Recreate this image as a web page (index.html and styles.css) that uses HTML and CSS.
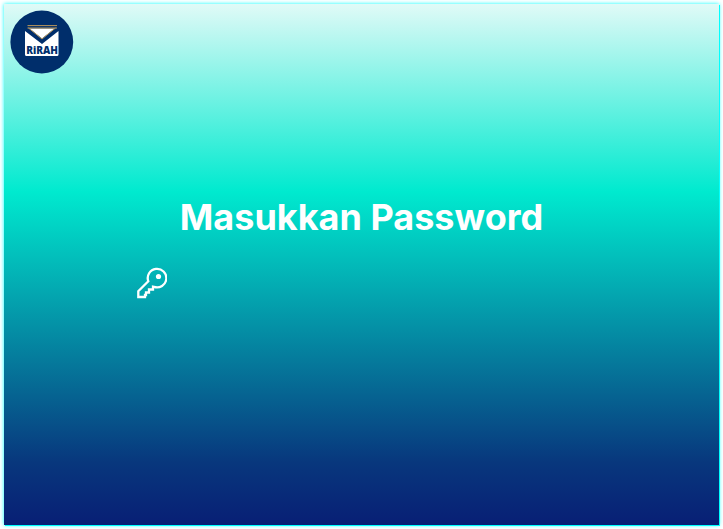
FILE: index.html
```html
<!DOCTYPE html>
<html lang="id">
<head>
<meta charset="utf-8">
<title>Masukkan Password</title>
<meta name="viewport" content="width=device-width, initial-scale=1">
<link rel="stylesheet" href="styles.css">
</head>
<body>
<div class="card">
  <header class="header">
    <svg class="logo" viewBox="0 0 64 64" role="img" aria-label="RiRAH">
      <circle cx="31.800" cy="32" r="31.400" fill="#002e6b"/>
      <path d="M15 21 32 34 48.500 21V44.500Q48.500 46 47 46H16.500Q15 46 15 44.500Z" fill="#fff"/>
      <path d="M16 16H48L32 33Z" fill="#002e6b"/>
      <path d="M19.500 18.500H44.500L32 28.500Z" fill="#fff"/>
      <path d="M17.500 15.600H47M17.500 18H47M18.500 18 32 29 45.500 18" fill="none" stroke="#b9975b" stroke-width="1"/>
      <text class="logo-text" x="32" y="44" text-anchor="middle">RiRAH</text>
    </svg>
  </header>
  <main class="content">
    <h1 class="title">Masukkan Password</h1>
    <form class="field">
      <label class="field-icon" for="password">
        <svg class="key" viewBox="-1 0 32 32" role="img" aria-label="Password">
          <path d="M12.300 14.300A9.300 9.300 0 1 1 18 19.900L17 19.700V22.500H13V25.500H10V28H9V30H2.300V24.300Z" fill="none" stroke="#fff" stroke-width="2.300"/>
          <circle cx="22.500" cy="9.500" r="2.600" fill="#fff"/>
        </svg>
      </label>
      <input class="input" id="password" type="password" autocomplete="off">
    </form>
  </main>
</div>
</body>
</html>
```
FILE: styles.css
```css
* {
  box-sizing: border-box;
}

body {
  margin: 0;
  padding: 4px;
  min-height: 100vh;
  display: flex;
  background: #fff;
  font-family: Inter, "Liberation Sans", sans-serif;
}

.card {
  flex: 1;
  display: flex;
  flex-direction: column;
  background: linear-gradient(180deg, #e0faf7 0%, #00eacf 36%, #08377d 88%, #081f75 100%);
  box-shadow: 1px 1px 0 #00ffff, 0 0 4px #00ffff;
}

.header {
  padding: 6px;
}

.logo {
  display: block;
  width: 64px;
  height: 64px;
}

.logo-text {
  font: 800 10px "Open Sans", sans-serif;
  fill: #002e6b;
}

.content {
  padding: 115px 24px 24px;
}

.title {
  margin: 0;
  color: #fff;
  font-size: 36px;
  font-weight: 700;
  line-height: 44px;
  text-align: center;
}

.field {
  display: flex;
  align-items: center;
  gap: 16px;
  width: 68%;
  margin: 28px auto 0;
}

.key {
  display: block;
  width: 32px;
  height: 32px;
}

.input {
  flex: 1;
  min-width: 0;
  height: 32px;
  padding: 0;
  border: 0;
  outline: 0;
  background: transparent;
  color: #fff;
  font: inherit;
}
```
